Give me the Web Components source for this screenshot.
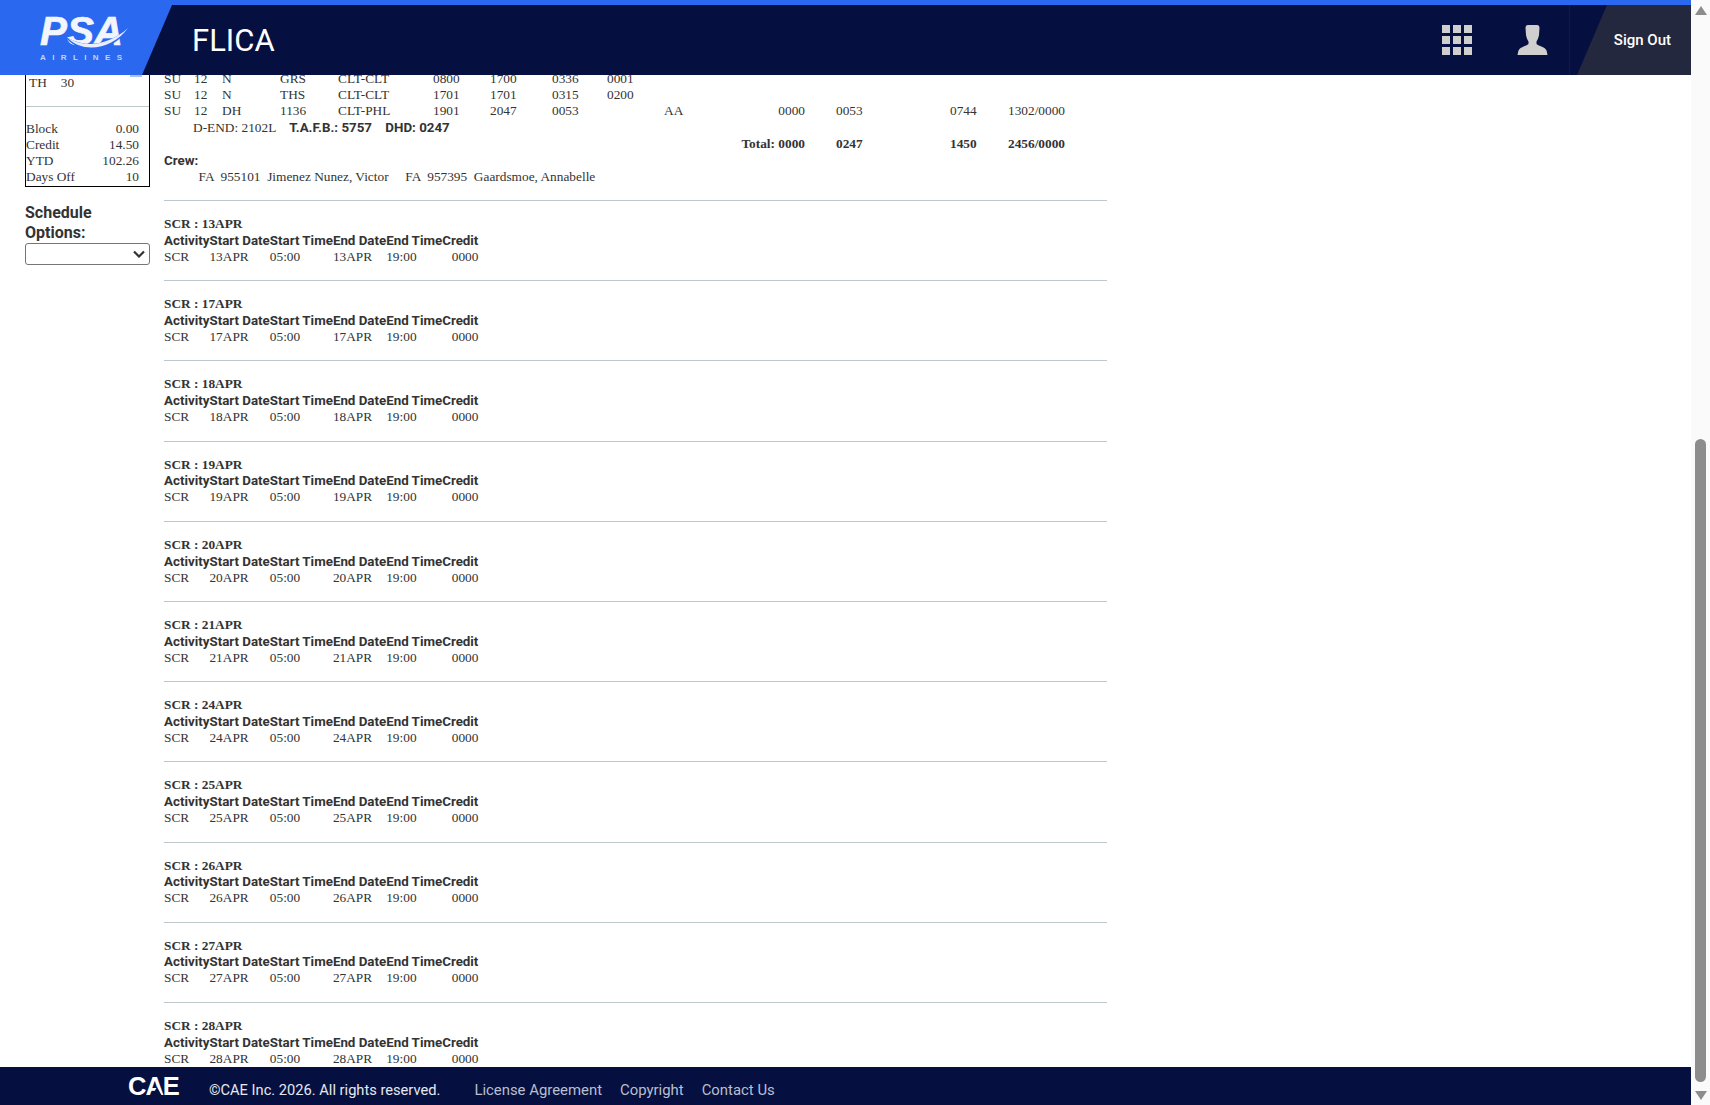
<!DOCTYPE html>
<html>
<head>
<meta charset="utf-8">
<title>FLICA</title>
<style>
  html, body { margin: 0; height: 100%; overflow: hidden; background: #fff; }
  body { display: flex; height: 1105px; }
  flica-page { flex: 1; min-width: 0; }
</style>
</head>
<body>
<flica-page></flica-page>
<flica-scrollbar></flica-scrollbar>

<script>
class FlicaHeader extends HTMLElement {
  constructor() {
    super();
    this.attachShadow({ mode: 'open' });
    this.shadowRoot.innerHTML = `
      <style>
        :host { display: block; height: 75px; box-sizing: border-box; position: relative; z-index: 2;
                background: #051040; border-top: 5px solid #2a69ef; font-family: Roboto, sans-serif; }
        .bar { display: flex; align-items: center; height: 70px; }
        .brand { width: 172px; height: 70px; flex: none; background: #2a69ef;
                 clip-path: polygon(0 0, 172px 0, 142px 70px, 0 70px); }
        .brand svg { display: block; }
        .tick { position: absolute; left: 130px; top: 70px; width: 12px; height: 1.5px; background: #a9c0f5; }
        h1 { margin: 2px 0 0 20px; font-size: 31px; font-weight: 400; color: #fff; flex: 1; }
        .icons { display: flex; align-items: center; gap: 45px; margin-right: 21px; }
        .grid { display: grid; grid-template-columns: repeat(3, 8px); gap: 3px; }
        .grid i { width: 8px; height: 8px; background: #cfcfcf; }
        .out { width: 121px; height: 70px; flex: none; display: flex; align-items: center; justify-content: flex-end;
               box-sizing: border-box; padding-right: 20px; background: #23283f; color: #fff;
               font-size: 15px; font-weight: 500;
               clip-path: polygon(37px 0, 121px 0, 121px 70px, 7px 70px); }
        .rule { width: 1px; height: 70px; background: #0d1a4a; flex: none; }
      </style>
      <div class="bar">
        <div class="brand">
          <svg width="172" height="70" viewBox="0 0 172 70">
            <text x="40" y="40" font-family="Liberation Sans, sans-serif" font-size="41" font-weight="700" font-style="italic" fill="#f2f5fc" stroke="#f2f5fc" stroke-width=".7" textLength="83" lengthAdjust="spacingAndGlyphs">PSA</text>
            <path d="M64 30 C80 43 108 43 130 21 C114 49 78 52 64 30 Z" fill="#2a69ef"/>
            <path d="M67 32 C84 44 110 40 128 23 C112 45 82 49 67 32 Z" fill="#e8eefc"/>
            <text x="40" y="55" font-family="Liberation Sans, sans-serif" font-size="8" font-weight="700" fill="#c4d2ee" textLength="82">AIRLINES</text>
          </svg>
        </div>
        <div class="tick"></div>
        <h1>FLICA</h1>
        <div class="icons">
          <div class="grid"><i></i><i></i><i></i><i></i><i></i><i></i><i></i><i></i><i></i></div>
          <svg width="31" height="30" viewBox="0 0 31 30">
            <path fill="#cfcfcf" d="M11 0H20C22 0 22.5 1.5 22.5 3L22 10C21.5 13 20.5 15 19.5 16.5L19.5 19C21 20.5 27 22 28.5 24C30 25.5 30 28 30.5 30H.5C1 28 1 25.5 2.5 24C4 22 10 20.5 11.5 19L11.5 16.5C10.5 15 9.5 13 9 10L8.5 3C8.5 1.5 9 0 11 0Z"/>
          </svg>
        </div>
        <div class="rule"></div>
        <div class="out">Sign Out</div>
      </div>`;
  }
}

class FlicaFooter extends HTMLElement {
  constructor() {
    super();
    this.attachShadow({ mode: 'open' });
    this.shadowRoot.innerHTML = `
      <style>
        :host { display: flex; align-items: center; height: 38px; background: #051040; flex: none;
                position: relative; z-index: 2; padding-left: 128px; font-family: Roboto, sans-serif; font-size: 14.67px; }
        .logo { position: relative; font: 700 25.5px/38px "Liberation Sans", sans-serif; color: #fff; width: 81px; letter-spacing: -1px; }
        .logo i { position: absolute; left: 24px; top: 20px; width: 0; height: 0;
                  border: 5px solid transparent; border-top: 0; border-bottom: 9px solid #051040; }
        .copy { color: #e6e8ee; margin-right: 34px; padding-top: 8px; }
        a { color: #b9bfcf; margin-right: 18px; text-decoration: none; padding-top: 8px; font-size: 14.9px; }
      </style>
      <span class="logo">CAE<i></i></span>
      <span class="copy">©CAE Inc. 2026. All rights reserved.</span>
      <a>License Agreement</a><a>Copyright</a><a>Contact Us</a>`;
  }
}

class FlicaSidebar extends HTMLElement {
  constructor() {
    super();
    this.attachShadow({ mode: 'open' });
    this.shadowRoot.innerHTML = `
      <style>
        :host { display: block; width: 125px; flex: none; margin-left: 25px; color: #333;
                font: 13.33px/16px "Liberation Serif", serif; }
        .box { border: 1px solid #000; border-top: 0; box-sizing: border-box; height: 112px; }
        .day { padding-left: 3px; height: 31px; }
        .day span { margin-right: 14px; }
        hr { margin: 0 0 14px; border: 0; border-top: 1px solid #bcc8cc; }
        .row { display: flex; justify-content: space-between; padding-right: 10px; }
        h3 { margin: 16px 0 0; font: 700 16px/20px Roboto, sans-serif; }
        .sel { height: 22px; box-sizing: border-box; border: 1px solid #767676; border-radius: 3px;
               display: flex; justify-content: flex-end; align-items: center; padding-right: 4px; }
      </style>
      <div class="box">
        <div class="day"><span>TH</span>30</div>
        <hr>
        <div class="row"><span>Block</span><span>0.00</span></div>
        <div class="row"><span>Credit</span><span>14.50</span></div>
        <div class="row"><span>YTD</span><span>102.26</span></div>
        <div class="row"><span>Days Off</span><span>10</span></div>
      </div>
      <h3>Schedule<br>Options:</h3>
      <div class="sel">
        <svg width="12" height="8" viewBox="0 0 12 8"><path d="M1 1.5L6 6.5L11 1.5" fill="none" stroke="#333" stroke-width="2.2"/></svg>
      </div>`;
  }
}

class ScrSection extends HTMLElement {
  constructor() {
    super();
    this.attachShadow({ mode: 'open' });
    const d = this.getAttribute('date');
    this.shadowRoot.innerHTML = `
      <style>
        :host { display: block; box-sizing: border-box; height: 80.2px; border-top: 1px solid #bcc8cc; padding-top: 15px; }
        h4 { margin: 0 0 .8px; font: 700 13.33px/16px "Liberation Serif", serif; }
        .t { display: grid; grid-template-columns: repeat(6, max-content); }
        .t b { font: 700 13.33px/16px Roboto, sans-serif; white-space: nowrap; }
        .t span:last-child { text-align: right; }
      </style>
      <h4>SCR : ${d}</h4>
      <div class="t">
        <b>Activity</b><b>Start Date</b><b>Start Time</b><b>End Date</b><b>End Time</b><b>Credit</b>
        <span>SCR</span><span>${d}</span><span>05:00</span><span>${d}</span><span>19:00</span><span>0000</span>
      </div>`;
  }
}

class TripDetail extends HTMLElement {
  constructor() {
    super();
    this.attachShadow({ mode: 'open' });
    const legs = [
      ['SU','12','N','GRS','CLT-CLT','0800','1700','0336','0001','','','','',''],
      ['SU','12','N','THS','CLT-CLT','1701','1701','0315','0200','','','','',''],
      ['SU','12','DH','1136','CLT-PHL','1901','2047','0053','','AA','0000','0053','0744','1302/0000']
    ];
    const rows = legs.map(l => l.map(c => `<span>${c}</span>`).join('')).join('');
    this.shadowRoot.innerHTML = `
      <style>
        :host { display: block; height: 129px; }
        .legs { display: grid; width: 901px; white-space: nowrap;
                grid-template-columns: 30px 28px 58px 58px 95px 57px 62px 55px 57px 100px 41px 145px 50px 65px; }
        .legs span:nth-child(14n+11), .legs span:nth-child(14n+14) { text-align: right; }
        .legs span:nth-child(14n+12) { padding-left: 31px; }
        .end { padding-left: 29px; margin-top: 1px; }
        .end b { font: 700 13.33px/16px Roboto, sans-serif; margin-left: 10px; }
        .total { display: grid; width: 901px; font-weight: 700;
                 grid-template-columns: 641px 145px 50px 65px; }
        .total span:first-child, .total span:last-child { text-align: right; }
        .total span:nth-child(2) { padding-left: 31px; }
        .crew-h { font: 700 13.33px/16px Roboto, sans-serif; margin-top: .5px; }
        .crew { padding-left: 34.5px; white-space: pre; }
      </style>
      <div class="legs">${rows}</div>
      <div class="end">D-END: 2102L <b>T.A.F.B.: 5757</b> <b>DHD: 0247</b></div>
      <div class="total"><span>Total: 0000</span><span>0247</span><span>1450</span><span>2456/0000</span></div>
      <div class="crew-h">Crew:</div>
      <div class="crew">FA  955101  Jimenez Nunez, Victor     FA  957395  Gaardsmoe, Annabelle</div>`;
  }
}

class FlicaPage extends HTMLElement {
  constructor() {
    super();
    this.attachShadow({ mode: 'open' });
    const dates = ['13APR','17APR','18APR','19APR','20APR','21APR','24APR','25APR','26APR','27APR','28APR'];
    this.shadowRoot.innerHTML = `
      <style>
        :host { display: flex; flex-direction: column; height: 1105px; color: #333; font: 13.33px/16px "Liberation Serif", serif; }
        main { flex: 1; min-height: 0; overflow: hidden; display: flex; align-items: flex-start; }
        .content { width: 943px; margin-left: 14px; flex: none; margin-top: -4px; }
      </style>
      <flica-header></flica-header>
      <main>
        <flica-sidebar></flica-sidebar>
        <div class="content">
          <trip-detail></trip-detail>
          ${dates.map(d => `<scr-section date="${d}"></scr-section>`).join('')}
        </div>
      </main>
      <flica-footer></flica-footer>`;
  }
}

class FlicaScrollbar extends HTMLElement {
  constructor() {
    super();
    this.attachShadow({ mode: 'open' });
    this.shadowRoot.innerHTML = `
      <style>
        :host { display: flex; flex-direction: column; align-items: center; width: 19px; height: 1105px; flex: none;
                background: #fafafa; box-sizing: border-box; padding: 6px 0 5px; }
        .track { flex: 1; width: 100%; display: flex; flex-direction: column; align-items: center; padding-top: 424px; box-sizing: border-box; }
        .thumb { width: 11px; height: 643px; border-radius: 6px; background: #8c8c8c; }
        .up { width: 0; height: 0; border: 6.5px solid transparent; border-top: 0; border-bottom: 9px solid #8c8c8c; }
        .down { width: 0; height: 0; border: 6.5px solid transparent; border-bottom: 0; border-top: 9px solid #8c8c8c; }
      </style>
      <div class="up"></div>
      <div class="track"><div class="thumb"></div></div>
      <div class="down"></div>`;
  }
}

customElements.define('flica-header', FlicaHeader);
customElements.define('flica-footer', FlicaFooter);
customElements.define('flica-sidebar', FlicaSidebar);
customElements.define('scr-section', ScrSection);
customElements.define('trip-detail', TripDetail);
customElements.define('flica-page', FlicaPage);
customElements.define('flica-scrollbar', FlicaScrollbar);
</script>
</body>
</html>
